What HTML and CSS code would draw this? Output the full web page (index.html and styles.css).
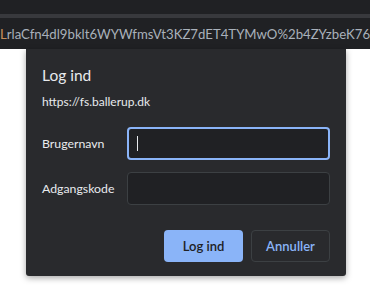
FILE: index.html
```html
<!DOCTYPE html>
<html lang="da">
<head>
<meta charset="utf-8">
<link rel="stylesheet" href="styles.css">
</head>
<body>
<header class="chrome">
  <div class="tabstrip"></div>
  <div class="divider"></div>
  <div class="omnibox"><span class="url"><span class="first">L</span>rlaCfn4dl9bklt6WYWfmsVt3KZ7dET4TYMwO%2b4ZYzbeK76</span></div>
</header>
<main class="page"></main>
<div class="dialog">
  <h1 class="title">Log ind</h1>
  <p class="origin">https://fs.ballerup.dk</p>
  <div class="fields">
    <label class="label" for="user">Brugernavn</label>
    <div class="input focused"><span class="caret"></span></div>
    <label class="label" for="pass">Adgangskode</label>
    <div class="input"></div>
  </div>
  <div class="actions">
    <button class="btn primary">Log ind</button>
    <button class="btn secondary">Annuller</button>
  </div>
</div>
</body>
</html>
```
FILE: styles.css
```css
html, body {
  margin: 0;
  padding: 0;
  background: #ffffff;
  font-family: "Segoe UI", Lato, "Noto Sans", sans-serif;
  width: 370px;
  height: 306px;
  overflow: hidden;
}
.chrome {
  background: #202124;
}
.tabstrip {
  height: 14px;
  background: #202124;
}
.divider {
  height: 4px;
  background: #38393d;
}
.omnibox {
  height: 31px;
  display: flex;
  align-items: center;
  overflow: hidden;
  white-space: nowrap;
}
.url {
  color: #a9b1bb;
  font-size: 13.2px;
  letter-spacing: 0;
  padding-top: 1px;
}
.first {
  color: #c8905c;
}
.page {
  height: 257px;
}
.dialog {
  position: absolute;
  left: 26px;
  top: 49px;
  width: 320px;
  height: 227px;
  box-sizing: border-box;
  background: #292a2d;
  border-radius: 0 0 3px 3px;
  box-shadow: 0 2px 6px rgba(0,0,0,0.35);
  padding: 16px 16px 14px 16px;
  color: #e8eaed;
  display: flex;
  flex-direction: column;
}
.title {
  margin: 0;
  font-size: 15.5px;
  font-weight: 400;
  line-height: 20px;
}
.origin {
  margin: 9px 0 0 0;
  font-size: 12px;
  line-height: 16px;
}
.fields {
  margin-top: 17px;
  display: grid;
  grid-template-columns: 85px 1fr;
  row-gap: 12px;
  align-items: center;
}
.label {
  font-size: 12.3px;
  color: #e8eaed;
}
.input {
  height: 33px;
  box-sizing: border-box;
  border: 1px solid #3c4043;
  border-radius: 4px;
  background: #202124;
  display: flex;
  align-items: center;
}
.input.focused {
  border: 2px solid #8ab4f8;
}
.caret {
  width: 1px;
  height: 15px;
  background: #e8eaed;
  margin-left: 8px;
}
.actions {
  margin-top: auto;
  display: flex;
  justify-content: flex-end;
  gap: 8px;
}
.btn {
  width: 79px;
  height: 32px;
  border-radius: 4px;
  font-family: inherit;
  font-size: 13px;
  font-weight: 600;
  cursor: pointer;
}
.primary {
  background: #8ab4f8;
  color: #202124;
  border: none;
}
.secondary {
  background: transparent;
  color: #8ab4f8;
  border: 1px solid #3c4043;
}
```
